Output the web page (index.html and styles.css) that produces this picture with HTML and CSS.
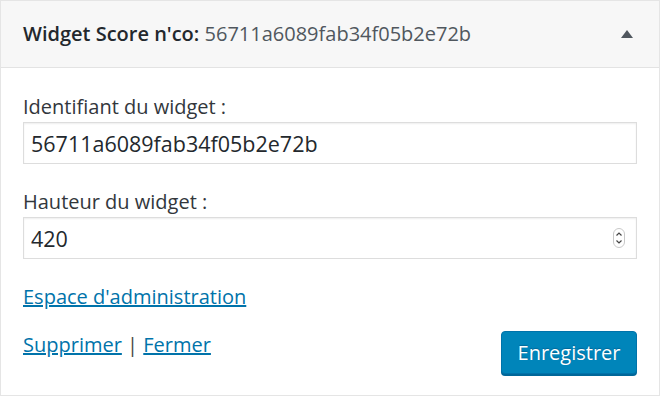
FILE: index.html
```html
<!DOCTYPE html>
<html lang="fr">
<head>
<meta charset="utf-8">
<title>Widget Score n'co</title>
<link rel="stylesheet" href="styles.css">
</head>
<body>
<div class="widget">
  <div class="widget-top">
    <h3 class="widget-title">Widget Score n'co: <span class="in-title">56711a6089fab34f05b2e72b</span></h3>
    <span class="toggle" aria-hidden="true"></span>
  </div>
  <div class="widget-inside">
    <p class="field">
      <label class="label" for="wid">Identifiant du widget :</label>
      <input class="input" id="wid" type="text" value="56711a6089fab34f05b2e72b">
    </p>
    <p class="field">
      <label class="label" for="wh">Hauteur du widget :</label>
      <span class="num-wrap">
        <input class="input num" id="wh" type="number" value="420">
        <svg class="spin" width="12" height="20" viewBox="0 0 12 20" aria-hidden="true">
          <rect x="0.5" y="0.5" width="11" height="19" rx="5.5" fill="#fff" stroke="#c8c8c8"/>
          <path d="M3.5 7.5 L6 5 L8.5 7.5" fill="none" stroke="#444" stroke-width="1.2"/>
          <path d="M3.5 12.5 L6 15 L8.5 12.5" fill="none" stroke="#444" stroke-width="1.2"/>
        </svg>
      </span>
    </p>
    <p class="admin"><a class="link" href="#">Espace d'administration</a></p>
    <div class="actions">
      <div class="links"><a class="link" href="#">Supprimer</a> <span class="sep">|</span> <a class="link" href="#">Fermer</a></div>
      <button class="button" type="button">Enregistrer</button>
    </div>
  </div>
</div>
</body>
</html>
```
FILE: styles.css
```css
html, body {
  margin: 0;
  padding: 0;
  background: #fff;
}
body {
  font-family: "Open Sans", "Liberation Sans", sans-serif;
  color: #32373c;
  font-size: 20px;
  line-height: 28px;
}
.widget {
  box-sizing: border-box;
  width: 660px;
  height: 396px;
  border: 1px solid #e5e5e5;
  background: #fff;
  display: flex;
  flex-direction: column;
}
.widget-top {
  height: 66px;
  background: #f7f7f7;
  border-bottom: 1px solid #e3e3e3;
  display: flex;
  align-items: center;
  justify-content: space-between;
  padding: 0 26px 0 22px;
}
.widget-title {
  margin: 0;
  font-size: 20px;
  font-weight: 600;
  color: #23282d;
  line-height: 28px;
}
.in-title {
  font-weight: 400;
  color: #50575e;
}
.toggle {
  width: 0;
  height: 0;
  border-left: 6px solid transparent;
  border-right: 6px solid transparent;
  border-bottom: 8px solid #50575e;
}
.widget-inside {
  padding: 25px 22px 0 22px;
}
.field {
  margin: 0 0 24px 0;
}
.label {
  display: block;
  margin-bottom: 1px;
}
.input {
  box-sizing: border-box;
  display: block;
  width: 100%;
  height: 42px;
  margin: 0;
  padding: 0 7px;
  border: 1px solid #ddd;
  box-shadow: inset 0 1px 2px rgba(0, 0, 0, 0.07);
  background: #fff;
  color: #23282d;
  font-family: "Open Sans", "Liberation Sans", sans-serif;
  font-size: 21.5px;
  outline: none;
}
.num-wrap {
  display: block;
  position: relative;
}
.num {
  -moz-appearance: textfield;
  appearance: textfield;
}
.num::-webkit-inner-spin-button,
.num::-webkit-outer-spin-button {
  -webkit-appearance: none;
  margin: 0;
}
.spin {
  position: absolute;
  right: 12px;
  top: 11px;
}
.admin {
  margin: 0 0 20px 0;
}
.link {
  color: #0073aa;
  text-decoration: underline;
}
.sep {
  color: #444;
}
.actions {
  display: flex;
  justify-content: space-between;
  align-items: flex-start;
}
.button {
  box-sizing: border-box;
  margin-top: 0;
  width: 136px;
  height: 43px;
  padding: 0 15px;
  background: #0085ba;
  border: 1px solid #0073aa;
  border-radius: 4px;
  box-shadow: 0 2px 0 #006799;
  color: #fff;
  font-family: "Open Sans", "Liberation Sans", sans-serif;
  font-size: 20px;
  line-height: 1;
  text-shadow: 0 -1px 1px #006799;
  cursor: pointer;
}
```
